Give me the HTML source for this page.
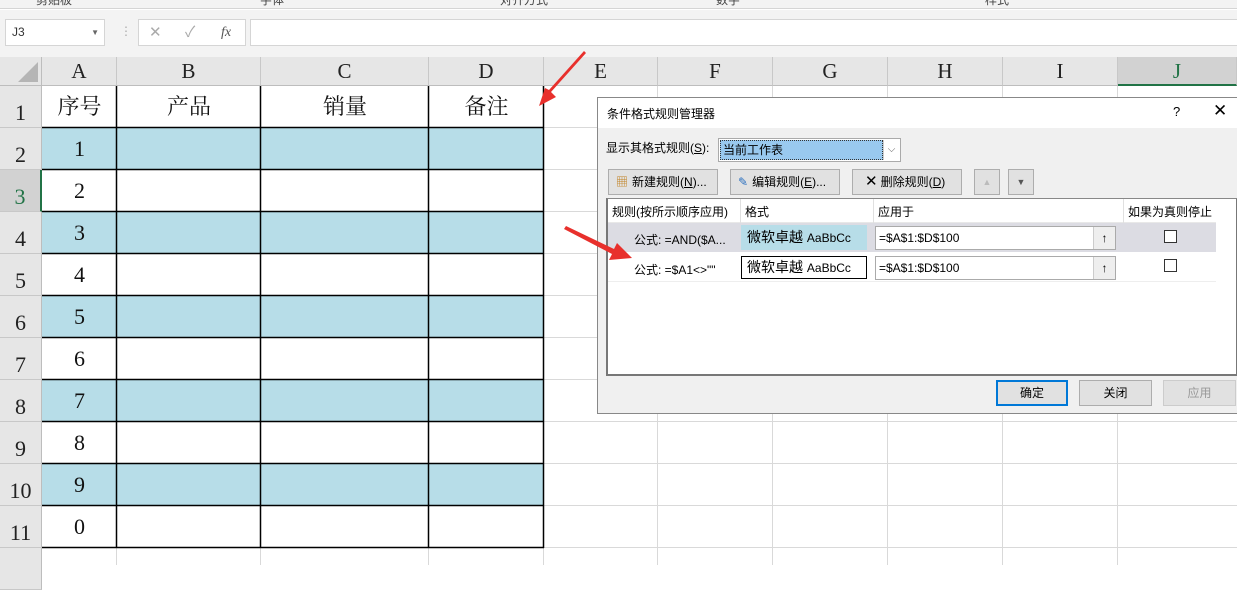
<!DOCTYPE html>
<html><head><meta charset="utf-8"><style>
*{margin:0;padding:0;box-sizing:border-box}
body{width:1237px;height:565px;overflow:hidden;background:#fff;position:relative;font-family:"Liberation Sans","Noto Sans CJK SC",sans-serif}
.a{position:absolute}
.serif{font-family:"Liberation Serif","Noto Serif CJK SC",serif}
.ch{position:absolute;top:57px;height:29px;background:#e6e6e6;border-right:1px solid #c8c8c8;border-bottom:1px solid #bdbdbd;text-align:center;font:21px/29px "Liberation Serif",serif;color:#222}
.rh{position:absolute;left:0;width:42px;height:42px;background:#e6e6e6;border-bottom:1px solid #c8c8c8;border-right:1px solid #bdbdbd;text-align:center;font:22px/54px "Liberation Serif",serif;color:#222}
.gl{position:absolute;background:#d9d9d9}
.cell{position:absolute;text-align:center;font:22px/42px "Liberation Serif","Noto Serif CJK SC",serif;color:#111}
.btn{position:absolute;background:#e1e1e1;border:1px solid #adadad;font-size:12px;line-height:24px;color:#000}
.d{font-size:12px;color:#000}
</style></head><body>
<!-- ribbon top -->
<div class="a" style="left:0;top:0;width:1237px;height:9px;background:#f3f3f3;border-bottom:1px solid #d5d5d5;overflow:hidden;font-size:12px;color:#444">
<span class="a" style="left:36px;top:-9px">剪贴板</span><span class="a" style="left:260px;top:-9px">字体</span><span class="a" style="left:500px;top:-9px">对齐方式</span><span class="a" style="left:716px;top:-9px">数字</span><span class="a" style="left:985px;top:-9px">样式</span>
</div>
<div class="a" style="left:0;top:10px;width:1237px;height:47px;background:#f3f3f3"></div>
<div class="a" style="left:5px;top:19px;width:100px;height:27px;background:#fff;border:1px solid #d5d5d5;font-size:12px;line-height:25px;padding-left:6px;color:#333">J3<span class="a" style="right:5px;top:0;font-size:8px;color:#666">▼</span></div>
<div class="a" style="left:120px;top:24px;color:#aaa;font-size:12px">⋮</div>
<div class="a" style="left:138px;top:19px;width:108px;height:27px;background:#fff;border:1px solid #d5d5d5;font-size:15px;line-height:25px;color:#aaa">
<span class="a" style="left:10px">✕</span><span class="a" style="left:46px">✓</span><span class="a" style="left:82px;color:#555;font-style:italic;font-family:'Liberation Serif',serif;font-size:14px">fx</span></div>
<div class="a" style="left:250px;top:19px;width:990px;height:27px;background:#fff;border:1px solid #d5d5d5"></div>

<!-- column headers -->
<div class="a" style="left:0;top:57px;width:42px;height:29px;background:#e6e6e6;border-right:1px solid #bdbdbd;border-bottom:1px solid #bdbdbd"></div>
<div class="a" style="left:18px;top:62px;width:0;height:0;border-left:20px solid transparent;border-bottom:20px solid #b5b5b5"></div>
<div class="ch" style="left:42px;width:75px">A</div>
<div class="ch" style="left:117px;width:144px">B</div>
<div class="ch" style="left:261px;width:168px">C</div>
<div class="ch" style="left:429px;width:115px">D</div>
<div class="ch" style="left:544px;width:114px">E</div>
<div class="ch" style="left:658px;width:115px">F</div>
<div class="ch" style="left:773px;width:115px">G</div>
<div class="ch" style="left:888px;width:115px">H</div>
<div class="ch" style="left:1003px;width:115px">I</div>
<div class="ch" style="left:1118px;width:119px;background:#d2d2d2;color:#217346;border-bottom:2px solid #217346">J</div>

<!-- row headers -->
<div class="rh" style="top:86px">1</div>
<div class="rh" style="top:128px">2</div>
<div class="rh" style="top:170px;background:#d2d2d2;color:#217346;border-right:2px solid #217346">3</div>
<div class="rh" style="top:212px">4</div>
<div class="rh" style="top:254px">5</div>
<div class="rh" style="top:296px">6</div>
<div class="rh" style="top:338px">7</div>
<div class="rh" style="top:380px">8</div>
<div class="rh" style="top:422px">9</div>
<div class="rh" style="top:464px">10</div>
<div class="rh" style="top:506px">11</div>
<div class="rh" style="top:548px"></div>

<!-- gridlines right area -->
<div class="gl" style="left:657px;top:86px;width:1px;height:479px"></div>
<div class="gl" style="left:772px;top:86px;width:1px;height:479px"></div>
<div class="gl" style="left:887px;top:86px;width:1px;height:479px"></div>
<div class="gl" style="left:1002px;top:86px;width:1px;height:479px"></div>
<div class="gl" style="left:1117px;top:86px;width:1px;height:479px"></div>
<div class="gl" style="left:116px;top:548px;width:1px;height:17px"></div>
<div class="gl" style="left:260px;top:548px;width:1px;height:17px"></div>
<div class="gl" style="left:428px;top:548px;width:1px;height:17px"></div>
<div class="gl" style="left:543px;top:548px;width:1px;height:17px"></div>
<div class="gl" style="left:544px;top:127px;width:693px;height:1px"></div>
<div class="gl" style="left:544px;top:169px;width:693px;height:1px"></div>
<div class="gl" style="left:544px;top:211px;width:693px;height:1px"></div>
<div class="gl" style="left:544px;top:253px;width:693px;height:1px"></div>
<div class="gl" style="left:544px;top:295px;width:693px;height:1px"></div>
<div class="gl" style="left:544px;top:337px;width:693px;height:1px"></div>
<div class="gl" style="left:544px;top:379px;width:693px;height:1px"></div>
<div class="gl" style="left:544px;top:421px;width:693px;height:1px"></div>
<div class="gl" style="left:544px;top:463px;width:693px;height:1px"></div>
<div class="gl" style="left:544px;top:505px;width:693px;height:1px"></div>
<div class="gl" style="left:544px;top:547px;width:693px;height:1px"></div>

<!-- table -->
<svg class="a" style="left:0;top:0" width="1237" height="565">
<g fill="#b7dde8">
<rect x="42" y="128" width="502" height="42"/><rect x="42" y="212" width="502" height="42"/><rect x="42" y="296" width="502" height="42"/><rect x="42" y="380" width="502" height="42"/><rect x="42" y="464" width="502" height="42"/>
</g>
<g stroke="#000" stroke-width="1.5" fill="none">
<path d="M116.5 86V548M260.5 86V548M428.5 86V548M543.5 86V548"/>
<path d="M42 127.5H544M42 169.5H544M42 211.5H544M42 253.5H544M42 295.5H544M42 337.5H544M42 379.5H544M42 421.5H544M42 463.5H544M42 505.5H544M42 547.5H544"/>
</g>
</svg>
<div class="cell" style="left:42px;top:86px;width:75px">序号</div>
<div class="cell" style="left:117px;top:86px;width:144px">产品</div>
<div class="cell" style="left:261px;top:86px;width:168px">销量</div>
<div class="cell" style="left:429px;top:86px;width:115px">备注</div>
<div class="cell" style="left:42px;top:128px;width:75px">1</div>
<div class="cell" style="left:42px;top:170px;width:75px">2</div>
<div class="cell" style="left:42px;top:212px;width:75px">3</div>
<div class="cell" style="left:42px;top:254px;width:75px">4</div>
<div class="cell" style="left:42px;top:296px;width:75px">5</div>
<div class="cell" style="left:42px;top:338px;width:75px">6</div>
<div class="cell" style="left:42px;top:380px;width:75px">7</div>
<div class="cell" style="left:42px;top:422px;width:75px">8</div>
<div class="cell" style="left:42px;top:464px;width:75px">9</div>
<div class="cell" style="left:42px;top:506px;width:75px">0</div>

<!-- dialog -->
<div class="a" style="left:597px;top:97px;width:645px;height:317px;background:#f0f0f0;border:1px solid #888">
<div class="a" style="left:0;top:0;width:645px;height:30px;background:#fff"></div>
<div class="a d" style="left:9px;top:7px">条件格式规则管理器</div>
<div class="a" style="left:575px;top:6px;font-size:13px">?</div>
<div class="a" style="left:615px;top:3px;font-size:17px">✕</div>
<div class="a d" style="left:8px;top:41px">显示其格式规则(<u>S</u>):</div>
<div class="a" style="left:120px;top:40px;width:183px;height:24px;background:#fff;border:1px solid #aaa"></div>
<div class="a d" style="left:122px;top:42px;width:163px;height:20px;background:#99c9ef;border:1px dotted #333;line-height:18px;padding-left:2px">当前工作表</div>
<div class="a" style="left:285px;top:42px;width:16px;height:20px;border-left:1px solid #ccc;font-size:10px;text-align:center;line-height:20px;color:#666">⌵</div>
<div class="a" style="left:8px;top:100px;width:632px;height:178px;background:#fff;border:2px solid #777;border-top:1px solid #888"></div>
<div class="btn" style="left:10px;top:71px;width:110px"><span style="color:#c08020;padding:0 4px 0 7px">▦</span>新建规则(<u>N</u>)...</div>
<div class="btn" style="left:132px;top:71px;width:110px"><span style="color:#2a6fbf;padding:0 4px 0 7px">✎</span>编辑规则(<u>E</u>)...</div>
<div class="btn" style="left:254px;top:71px;width:110px"><span style="padding:0 3px 0 12px;font-size:15px">✕</span>删除规则(<u>D</u>)</div>
<div class="btn" style="left:376px;top:71px;width:26px;text-align:center;color:#bbb;font-size:9px">▲</div>
<div class="btn" style="left:410px;top:71px;width:26px;text-align:center;color:#555;font-size:9px">▼</div>
<div class="a" style="left:10px;top:101px;width:608px;height:24px;border-bottom:1px solid #e8e8e8"></div>
<div class="a d" style="left:14px;top:105px">规则(按所示顺序应用)</div>
<div class="a" style="left:142px;top:101px;width:1px;height:24px;background:#e0e0e0"></div>
<div class="a d" style="left:147px;top:105px">格式</div>
<div class="a" style="left:275px;top:101px;width:1px;height:24px;background:#e0e0e0"></div>
<div class="a d" style="left:280px;top:105px">应用于</div>
<div class="a" style="left:525px;top:101px;width:1px;height:24px;background:#e0e0e0"></div>
<div class="a d" style="left:530px;top:105px">如果为真则停止</div>
<div class="a" style="left:10px;top:125px;width:608px;height:29px;background:#dcdce3"></div>
<div class="a" style="left:10px;top:183px;width:608px;height:1px;background:#eee"></div>
<div class="a d" style="left:36px;top:133px">公式: =AND($A...</div>
<div class="a" style="left:143px;top:127px;width:126px;height:25px;background:#b7dde8;font-size:14px;line-height:25px;padding-left:6px">微软卓越 <span style="font-size:12px">AaBbCc</span></div>
<div class="a d" style="left:277px;top:128px;width:241px;height:24px;background:#fff;border:1px solid #aaa;line-height:22px;padding-left:3px">=$A$1:$D$100</div>
<div class="a" style="left:495px;top:129px;width:22px;height:22px;background:#eee;border-left:1px solid #ccc;text-align:center;font-size:12px;font-weight:bold;line-height:22px">↑</div>
<div class="a" style="left:566px;top:132px;width:13px;height:13px;border:1px solid #333;background:#fff"></div>
<div class="a d" style="left:36px;top:163px">公式: =$A1&lt;&gt;""</div>
<div class="a" style="left:143px;top:158px;width:126px;height:23px;background:#fff;border:1px solid #000;font-size:14px;line-height:21px;padding-left:5px">微软卓越 <span style="font-size:12px">AaBbCc</span></div>
<div class="a d" style="left:277px;top:158px;width:241px;height:24px;background:#fff;border:1px solid #aaa;line-height:22px;padding-left:3px">=$A$1:$D$100</div>
<div class="a" style="left:495px;top:159px;width:22px;height:22px;background:#eee;border-left:1px solid #ccc;text-align:center;font-size:12px;font-weight:bold;line-height:22px">↑</div>
<div class="a" style="left:566px;top:161px;width:13px;height:13px;border:1px solid #333;background:#fff"></div>
<div class="btn" style="left:398px;top:282px;width:72px;border:2px solid #0078d7;text-align:center;line-height:22px">确定</div>
<div class="btn" style="left:481px;top:282px;width:73px;text-align:center">关闭</div>
<div class="btn" style="left:565px;top:282px;width:73px;text-align:center;color:#999;border-color:#ccc">应用</div>
</div>

<!-- red arrows -->
<svg class="a" style="left:0;top:0" width="1237" height="565">
<path d="M586 53 L551 92 L556 97 L539 106 L545 88 L549 90 L584 51 Z" fill="#e8302c"/>
<path d="M566 226 L614 249 L617 243 L632 258 L609 260 L612 254 L564 229 Z" fill="#e8302c"/>
</svg>
</body></html>
